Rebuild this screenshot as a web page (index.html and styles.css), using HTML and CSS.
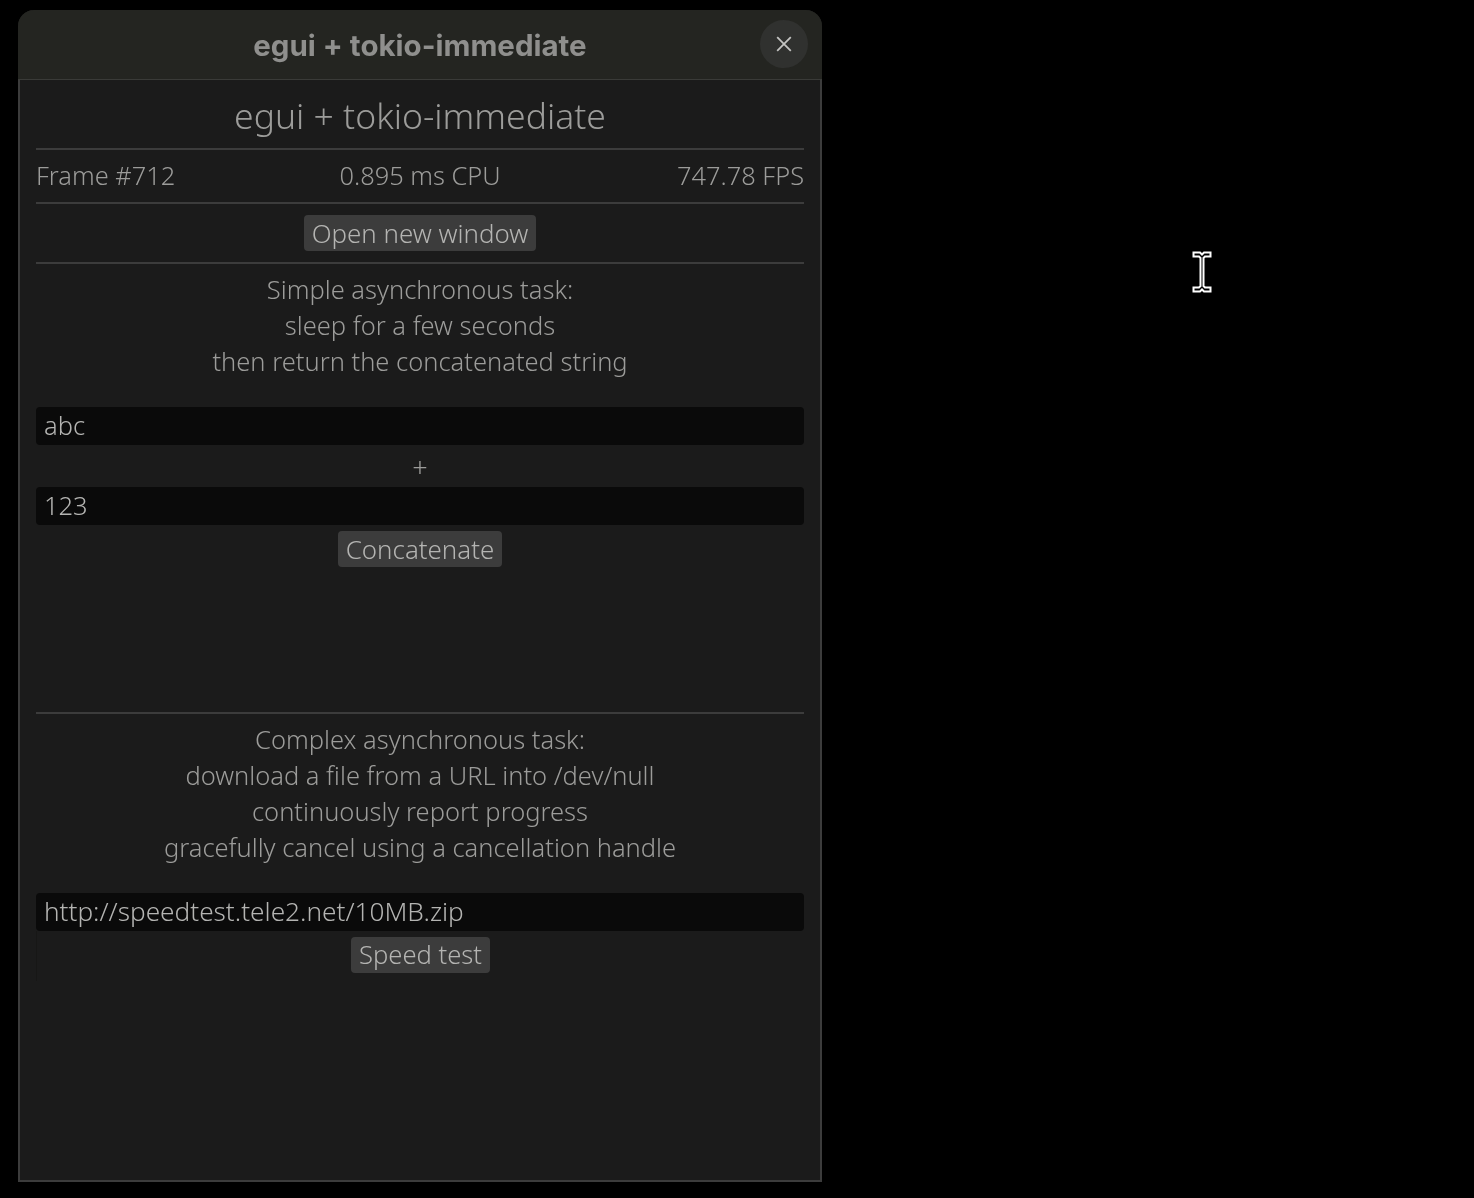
FILE: index.html
```html
<!DOCTYPE html>
<html lang="en">

<head>
    <meta charset="UTF-8">
    <meta name="viewport" content="width=device-width, initial-scale=1.0">
    <title>egui + tokio-immediate</title>
    <link rel="stylesheet" href="styles.css">
</head>

<body>
    <div class="window">
        <header class="titlebar">
            <span class="title">egui + tokio-immediate</span>
            <button class="close" aria-label="Close">
                <svg width="16" height="16" viewBox="0 0 16 16">
                    <path d="M1.2 1.2 L14.8 14.8 M14.8 1.2 L1.2 14.8" />
                </svg>
            </button>
        </header>

        <main class="content">
            <h1 class="heading">egui + tokio-immediate</h1>
            <hr class="sep">
            <div class="stats">
                <span>Frame #712</span>
                <span class="stat-mid">0.895 ms CPU</span>
                <span class="stat-right">747.78 FPS</span>
            </div>
            <hr class="sep">
            <div class="center"><button class="btn">Open new window</button></div>
            <hr class="sep sep-open">

            <p class="desc">Simple asynchronous task:<br>sleep for a few seconds<br>then return the concatenated string</p>
            <div class="field field-first">abc</div>
            <div class="plus">+</div>
            <div class="field">123</div>
            <div class="center center-btn"><button class="btn">Concatenate</button></div>
            <hr class="sep sep-simple">

            <p class="desc">Complex asynchronous task:<br>download a file from a URL into /dev/null<br>continuously report progress<br>gracefully cancel using a cancellation handle</p>
            <div class="field field-first field-url">http://speedtest.tele2.net/10MB.zip</div>
            <div class="center speed-row"><button class="btn btn-speed">Speed test</button></div>
        </main>
    </div>

    <svg class="cursor" width="20" height="42" viewBox="0 0 20 42">
        <path d="M1.5 1.5 H8 L10 3.5 L12 1.5 H18.5 V5.5 H13 L11.5 7 V35 L13 36.5 H18.5 V40.5 H12 L10 38.5 L8 40.5 H1.5 V36.5 H7 L8.5 35 V7 L7 5.5 H1.5 Z" />
    </svg>
</body>

</html>
```

FILE: styles.css
```css
* {
    box-sizing: border-box;
}

html, body {
    height: 100%;
}

body {
    margin: 0;
    padding: 10px 0 0 18px;
    background-color: #000000;
    font-family: "Noto Sans", "Open Sans", sans-serif;
    font-weight: 300;
    color: #9c9c9a;
    overflow: hidden;
}

.window {
    width: 804px;
    height: 1172px;
    display: flex;
    flex-direction: column;
    background-color: #1b1b1b;
    border-radius: 16px 16px 0 0;
    will-change: transform;
}

.titlebar {
    height: 70px;
    flex: none;
    display: flex;
    align-items: center;
    justify-content: center;
    position: relative;
    background-color: #242521;
    border-radius: 16px 16px 0 0;
    border-bottom: 1px solid #3a3b38;
}

.title {
    font-family: Inter, "Liberation Sans", sans-serif;
    font-size: 29.5px;
    font-weight: 700;
    color: #8f8f8d;
    margin-top: 1px;
}

.close {
    position: absolute;
    top: 10px;
    right: 14px;
    width: 48px;
    height: 48px;
    display: flex;
    align-items: center;
    justify-content: center;
    padding: 0;
    border: none;
    border-radius: 50%;
    background-color: #30312f;
}

.close path {
    stroke: #c4c4c2;
    stroke-width: 1.8;
    fill: none;
}

.content {
    flex: 1;
    padding: 0 16px;
    border: 2px solid #3c3c3c;
    border-top: none;
}

.heading {
    margin: 0;
    height: 68px;
    line-height: 70px;
    font-size: 35.5px;
    font-weight: 300;
    text-align: center;
    color: #9c9c9a;
}

.sep {
    margin: 0;
    height: 2px;
    border: none;
    background-color: #3c3c3c;
}

.sep-open {
    margin-top: 11px;
}

.sep-simple {
    margin-top: 145px;
}

.stats {
    height: 52px;
    padding-bottom: 2px;
    display: grid;
    grid-template-columns: 1fr auto 1fr;
    align-items: center;
    font-size: 25.4px;
}

.stat-right {
    text-align: right;
}

.center {
    display: flex;
    justify-content: center;
    margin-top: 11px;
}

.center-btn {
    margin-top: 6px;
}

/* faint edge of the empty progress area under the url field */
.speed-row {
    height: 50px;
    margin-top: 0;
    padding-top: 6px;
    align-items: flex-start;
    border-left: 1px solid #171716;
}

.btn {
    height: 36px;
    padding: 0 8px;
    border: none;
    border-radius: 4px;
    background-color: #3c3c3c;
    font-family: inherit;
    font-weight: 300;
    font-size: 25.9px;
    line-height: 32px;
    color: #b4b4b2;
}

.btn-speed {
    font-size: 25.6px;
}

.desc {
    margin: 7px 0 0;
    font-size: 25.5px;
    line-height: 36px;
    text-align: center;
}

.field {
    height: 38px;
    padding: 0 8px 2px;
    border-radius: 4px;
    background-color: #0a0a0a;
    font-size: 25.5px;
    line-height: 36px;
    color: #b4b4b2;
}

.field-first {
    margin-top: 28px;
}

.field-url {
    font-size: 26.2px;
}

.plus {
    height: 42px;
    line-height: 44px;
    text-align: center;
    font-size: 27px;
}

.cursor {
    position: absolute;
    left: 1192px;
    top: 251px;
}

.cursor path {
    fill: #000000;
    stroke: #ffffff;
    stroke-width: 2;
}
```
